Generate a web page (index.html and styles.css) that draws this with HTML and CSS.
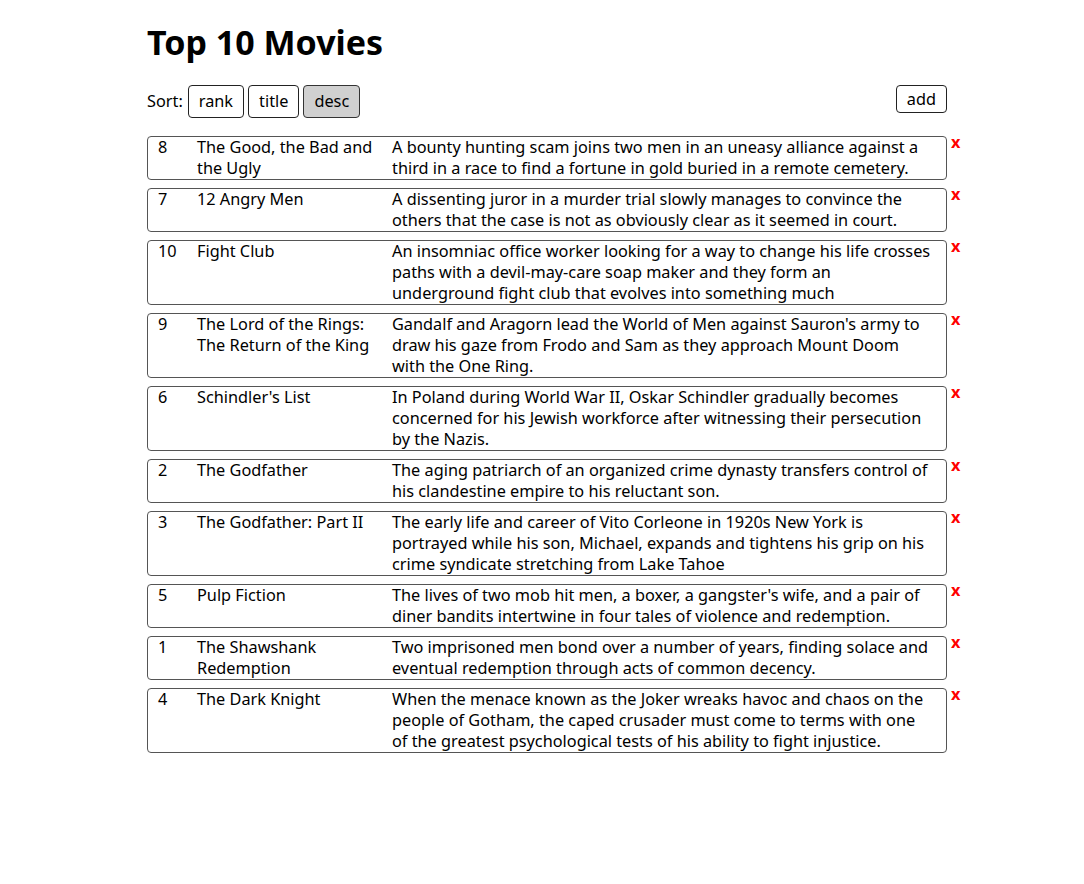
FILE: index.html
```html
<!DOCTYPE html>
<html lang="en">
<head>
<meta charset="utf-8">
<title>Top 10 Movies</title>
<link rel="stylesheet" href="styles.css">
</head>
<body>
<div class="page">
  <h1 class="title">Top 10 Movies</h1>
  <div class="toolbar">
    <div class="sort">
      <span class="sort-label">Sort:</span>
      <button class="btn btn-sort">rank</button>
      <button class="btn btn-sort">title</button>
      <button class="btn btn-sort active">desc</button>
    </div>
    <button class="btn btn-add">add</button>
  </div>
  <ul class="list">
    <li class="item">
      <div class="card"><span class="rank">8</span><span class="name">The Good, the Bad and<br>the Ugly</span><span class="desc">A bounty hunting scam joins two men in an uneasy alliance against a<br>third in a race to find a fortune in gold buried in a remote cemetery.</span></div>
      <span class="del">x</span>
    </li>
    <li class="item">
      <div class="card"><span class="rank">7</span><span class="name">12 Angry Men</span><span class="desc">A dissenting juror in a murder trial slowly manages to convince the<br>others that the case is not as obviously clear as it seemed in court.</span></div>
      <span class="del">x</span>
    </li>
    <li class="item">
      <div class="card"><span class="rank">10</span><span class="name">Fight Club</span><span class="desc">An insomniac office worker looking for a way to change his life crosses<br>paths with a devil-may-care soap maker and they form an<br>underground fight club that evolves into something much</span></div>
      <span class="del">x</span>
    </li>
    <li class="item">
      <div class="card"><span class="rank">9</span><span class="name">The Lord of the Rings:<br>The Return of the King</span><span class="desc">Gandalf and Aragorn lead the World of Men against Sauron's army to<br>draw his gaze from Frodo and Sam as they approach Mount Doom<br>with the One Ring.</span></div>
      <span class="del">x</span>
    </li>
    <li class="item">
      <div class="card"><span class="rank">6</span><span class="name">Schindler's List</span><span class="desc">In Poland during World War II, Oskar Schindler gradually becomes<br>concerned for his Jewish workforce after witnessing their persecution<br>by the Nazis.</span></div>
      <span class="del">x</span>
    </li>
    <li class="item">
      <div class="card"><span class="rank">2</span><span class="name">The Godfather</span><span class="desc">The aging patriarch of an organized crime dynasty transfers control of<br>his clandestine empire to his reluctant son.</span></div>
      <span class="del">x</span>
    </li>
    <li class="item">
      <div class="card"><span class="rank">3</span><span class="name">The Godfather: Part II</span><span class="desc">The early life and career of Vito Corleone in 1920s New York is<br>portrayed while his son, Michael, expands and tightens his grip on his<br>crime syndicate stretching from Lake Tahoe</span></div>
      <span class="del">x</span>
    </li>
    <li class="item">
      <div class="card"><span class="rank">5</span><span class="name">Pulp Fiction</span><span class="desc">The lives of two mob hit men, a boxer, a gangster's wife, and a pair of<br>diner bandits intertwine in four tales of violence and redemption.</span></div>
      <span class="del">x</span>
    </li>
    <li class="item">
      <div class="card"><span class="rank">1</span><span class="name">The Shawshank<br>Redemption</span><span class="desc">Two imprisoned men bond over a number of years, finding solace and<br>eventual redemption through acts of common decency.</span></div>
      <span class="del">x</span>
    </li>
    <li class="item">
      <div class="card"><span class="rank">4</span><span class="name">The Dark Knight</span><span class="desc">When the menace known as the Joker wreaks havoc and chaos on the<br>people of Gotham, the caped crusader must come to terms with one<br>of the greatest psychological tests of his ability to fight injustice.</span></div>
      <span class="del">x</span>
    </li>
  </ul>
</div>
</body>
</html>
```
FILE: styles.css
```css
* { box-sizing: border-box; }

body {
  margin: 0;
  padding: 0 0 40px 147px;
  background: #ffffff;
  color: #000000;
  font-family: "Noto Sans", "Open Sans", sans-serif;
  font-size: 16.3px;
  line-height: 21px;
}

.page {
  width: 800px;
}

.title {
  margin: 19px 0 20px;
  font-size: 34px;
  line-height: 46px;
  font-weight: 700;
}

.toolbar {
  display: flex;
  justify-content: space-between;
  align-items: flex-start;
}

.sort {
  display: flex;
  align-items: center;
  gap: 4px;
}

.sort-label {
  margin-right: 1px;
}

.btn {
  font-family: inherit;
  font-size: 16.3px;
  line-height: 21px;
  color: #000;
  background: #fff;
  border: 1px solid #222;
  border-radius: 4px;
  padding: 0 10px;
  margin: 0;
}

.btn-sort {
  height: 33px;
}

.btn-sort.active {
  background: #d0d0d0;
  border-color: #333;
}

.btn-add {
  height: 28px;
  padding: 0 10px;
}

.list {
  list-style: none;
  margin: 18px 0 0;
  padding: 0;
}

.item {
  display: flex;
  align-items: flex-start;
  margin-bottom: 8px;
}

.card {
  flex: none;
  width: 800px;
  display: grid;
  grid-template-columns: 39px 195px 1fr;
  padding: 0 4px 0 10px;
  border: 1px solid #555;
  border-radius: 4px;
}

.desc {
  white-space: nowrap;
}

.del {
  margin: -2px 0 0 4px;
  color: #ff0000;
  font-weight: 700;
  font-size: 16.3px;
  line-height: 16px;
}
```
